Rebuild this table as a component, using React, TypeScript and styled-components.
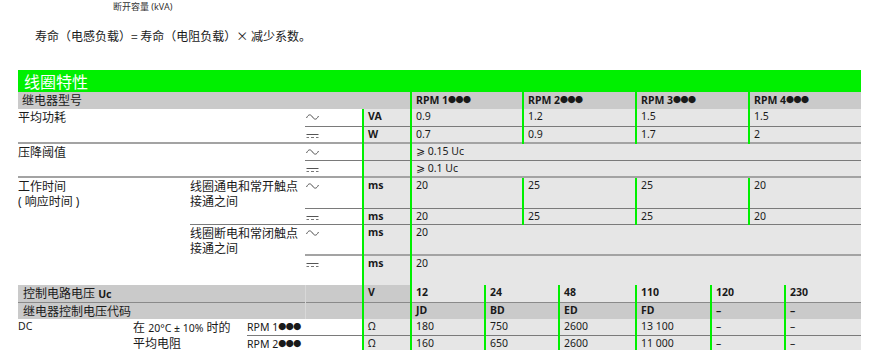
import styled, { createGlobalStyle } from "styled-components";

const GlobalStyle = createGlobalStyle`
    body {
        margin: 0;
        background: #ffffff;
        color: #1a1a1a;
        font-family: "Noto Sans", "Noto Sans CJK SC", sans-serif;
    }
`;

const GREEN = "#00f000";
const HEAD = "#cacaca";
const LIGHT = "#e6e6e6";

const Page = styled.div`
    width: 880px;
    height: 350px;
    overflow: hidden;
`;

const SmallNote = styled.div`
    padding: 1px 0 0 113px;
    font-size: 9px;
    line-height: 11px;
    color: #333;
`;

const Formula = styled.p`
    margin: 17px 0 0 35px;
    font-size: 12px;
    line-height: 14px;
    font-family: "Noto Sans CJK SC", sans-serif;
`;

const Sheet = styled.section`
    width: 843px;
    margin: 27px 0 0 18px;
`;

const TitleBar = styled.h2`
    margin: 0;
    height: 22px;
    padding-left: 6px;
    background: ${GREEN};
    color: #ffffff;
    font-size: 16px;
    line-height: 22px;
    font-weight: 400;
    font-family: "Noto Sans CJK SC", sans-serif;
`;

const Grid = styled.table`
    width: 843px;
    table-layout: fixed;
    border-collapse: collapse;
    font-size: 10.5px;
    line-height: 13px;
`;

type Tone = "white" | "light" | "head";
type Rule = "none" | "thin" | "thick" | "dark";

const ruleStyle: Record<Rule, string> = {
    none: "none",
    thin: "1px solid #7a7a7a",
    thick: "2px solid #a3a3a3",
    dark: "1px solid #8a8a8a",
};

const Cell = styled.td<{
    $tone?: Tone;
    $green?: boolean;
    $bold?: boolean;
    $rule?: Rule;
    $h?: number;
    $faint?: boolean;
    $pad?: number;
    $han?: boolean;
}>`
    padding: 1px 0 0 ${(p) => (p.$pad ?? 4)}px;
    height: ${(p) => (p.$h ? `${p.$h}px` : "auto")};
    vertical-align: top;
    white-space: nowrap;
    overflow: hidden;
    background: ${(p) => (p.$tone === "head" ? HEAD : p.$tone === "light" ? LIGHT : "#ffffff")};
    font-weight: ${(p) => (p.$bold ? 700 : 400)};
    font-size: ${(p) => (p.$han ? "12px" : "10.5px")};
    line-height: ${(p) => (p.$han ? "15px" : "13px")};
    border-top: ${(p) => ruleStyle[p.$rule ?? "none"]};
    border-left: ${(p) => (p.$green ? `2px solid ${GREEN}` : p.$faint ? "1px solid #d8d8d8" : "none")};
    font-family: "Noto Sans", "Noto Sans CJK SC", sans-serif;
`;

const Latin = styled.span`
    font-size: 10.5px;
`;

const Dots = styled.span`
    font-size: 8px;
    letter-spacing: -0.5px;
    vertical-align: 1px;
`;

const Sym = styled.svg`
    display: block;
    margin-top: 3px;
`;

function AcSign() {
    return (
        <Sym width="13" height="8" viewBox="0 0 13 8">
            <path d="M0.5 5 C2.5 1 4.5 1 6.5 4 S10.5 7 12.5 3" fill="none" stroke="#555" strokeWidth="1" />
        </Sym>
    );
}

function DcSign() {
    return (
        <Sym width="13" height="8" viewBox="0 0 13 8">
            <path d="M0.5 3.5 H12.5" stroke="#555" strokeWidth="1" />
            <path d="M0.5 6.5 H3 M5 6.5 H8 M10 6.5 H12.5" stroke="#777" strokeWidth="1" />
        </Sym>
    );
}

function Model({ n }: { n: number }) {
    return (
        <>
            RPM {n}
            <Dots>●●●</Dots>
        </>
    );
}

const topCols = [172, 115, 58, 48, 112, 113, 113, 112];
const bottomCols = [115, 114, 58, 58, 48, 74, 74, 77, 75, 74, 76];

function Cols({ widths }: { widths: number[] }) {
    return (
        <colgroup>
            {widths.map((w, i) => (
                <col key={i} style={{ width: w }} />
            ))}
        </colgroup>
    );
}

function DataCells({ values, rule, bold }: { values: string[]; rule?: Rule; bold?: boolean }) {
    return (
        <>
            {values.map((v, i) => (
                <Cell key={i} $tone="light" $green $rule={rule} $bold={bold}>
                    {v}
                </Cell>
            ))}
        </>
    );
}

export default function App() {
    return (
        <Page>
            <GlobalStyle />
            <SmallNote>断开容量 (kVA)</SmallNote>
            <Formula>寿命（电感负载）= 寿命（电阻负载）× 减少系数。</Formula>
            <Sheet>
                <TitleBar>线圈特性</TitleBar>
                <Grid>
                    <Cols widths={topCols} />
                    <tbody>
                        <tr>
                            <Cell colSpan={4} $tone="head" $han $h={16}>继电器型号</Cell>
                            {[1, 2, 3, 4].map((n) => (
                                <Cell key={n} $tone="head" $green $bold>
                                    <Model n={n} />
                                </Cell>
                            ))}
                        </tr>
                        <tr>
                            <Cell rowSpan={2} colSpan={2} $pad={0} $han>平均功耗</Cell>
                            <Cell $pad={1} $h={16}><AcSign /></Cell>
                            <Cell $tone="light" $green $bold>VA</Cell>
                            <DataCells values={["0.9", "1.2", "1.5", "1.5"]} />
                        </tr>
                        <tr>
                            <Cell $pad={1} $rule="thin" $h={14}><DcSign /></Cell>
                            <Cell $tone="light" $green $bold $rule="thin">W</Cell>
                            <DataCells values={["0.7", "0.9", "1.7", "2"]} rule="thin" />
                        </tr>
                        <tr>
                            <Cell rowSpan={2} colSpan={2} $pad={0} $han $rule="thick">压降阈值</Cell>
                            <Cell $pad={1} $rule="thick" $h={15}><AcSign /></Cell>
                            <Cell $tone="light" $green $rule="thick" />
                            <Cell colSpan={4} $tone="light" $green $rule="thick">⩾ 0.15 Uc</Cell>
                        </tr>
                        <tr>
                            <Cell $pad={1} $rule="thin" $h={14}><DcSign /></Cell>
                            <Cell $tone="light" $green $rule="thin" />
                            <Cell colSpan={4} $tone="light" $green $rule="thin">⩾ 0.1 Uc</Cell>
                        </tr>
                        <tr>
                            <Cell rowSpan={4} $pad={0} $han $rule="thick">
                                工作时间
                                <br />
                                ( 响应时间 )
                            </Cell>
                            <Cell rowSpan={2} $pad={0} $han $rule="thick">
                                线圈通电和常开触点
                                <br />
                                接通之间
                            </Cell>
                            <Cell $pad={1} $rule="thick" $h={29}><AcSign /></Cell>
                            <Cell $tone="light" $green $bold $rule="thick">ms</Cell>
                            <DataCells values={["20", "25", "25", "20"]} rule="thick" />
                        </tr>
                        <tr>
                            <Cell $pad={1} $rule="thin" $h={14}><DcSign /></Cell>
                            <Cell $tone="light" $green $bold $rule="thin">ms</Cell>
                            <DataCells values={["20", "25", "25", "20"]} rule="thin" />
                        </tr>
                        <tr>
                            <Cell rowSpan={2} $pad={0} $han $rule="thin">
                                线圈断电和常闭触点
                                <br />
                                接通之间
                            </Cell>
                            <Cell $pad={1} $rule="thin" $h={28}><AcSign /></Cell>
                            <Cell $tone="light" $green $bold $rule="thin">ms</Cell>
                            <Cell colSpan={4} $tone="light" $green $rule="thin">20</Cell>
                        </tr>
                        <tr>
                            <Cell $pad={1} $rule="thick" $h={28}><DcSign /></Cell>
                            <Cell $tone="light" $green $bold $rule="thick">ms</Cell>
                            <Cell colSpan={4} $tone="light" $green $rule="thick">20</Cell>
                        </tr>
                    </tbody>
                </Grid>
                <Grid>
                    <Cols widths={bottomCols} />
                    <tbody>
                        <tr>
                            <Cell colSpan={3} $tone="head" $pad={5} $han $h={15}>
                                控制电路电压 <Latin><b>Uc</b></Latin>
                            </Cell>
                            <Cell $tone="head" $faint />
                            <Cell $tone="head" $green $bold>V</Cell>
                            <DataCells values={["12", "24", "48", "110", "120", "230"]} bold />
                        </tr>
                        <tr>
                            <Cell colSpan={3} $tone="head" $pad={5} $han $rule="dark" $h={15}>继电器控制电压代码</Cell>
                            <Cell $tone="head" $faint $rule="dark" />
                            <Cell $tone="head" $green $rule="dark" />
                            {["JD", "BD", "ED", "FD", "–", "–"].map((v, i) => (
                                <Cell key={i} $tone="head" $green $bold $rule="dark">{v}</Cell>
                            ))}
                        </tr>
                        <tr>
                            <Cell rowSpan={2} $pad={0}>DC</Cell>
                            <Cell rowSpan={2} $pad={0} $han>
                                在 <Latin>20°C ± 10%</Latin> 时的
                                <br />
                                平均电阻
                            </Cell>
                            <Cell colSpan={2} $pad={0} $h={15}><Model n={1} /></Cell>
                            <Cell $tone="light" $green>Ω</Cell>
                            <DataCells values={["180", "750", "2600", "13 100", "–", "–"]} />
                        </tr>
                        <tr>
                            <Cell colSpan={2} $pad={0} $rule="thin" $h={15}><Model n={2} /></Cell>
                            <Cell $tone="light" $green $rule="thin">Ω</Cell>
                            <DataCells values={["160", "650", "2600", "11 000", "–", "–"]} rule="thin" />
                        </tr>
                    </tbody>
                </Grid>
            </Sheet>
        </Page>
    );
}
